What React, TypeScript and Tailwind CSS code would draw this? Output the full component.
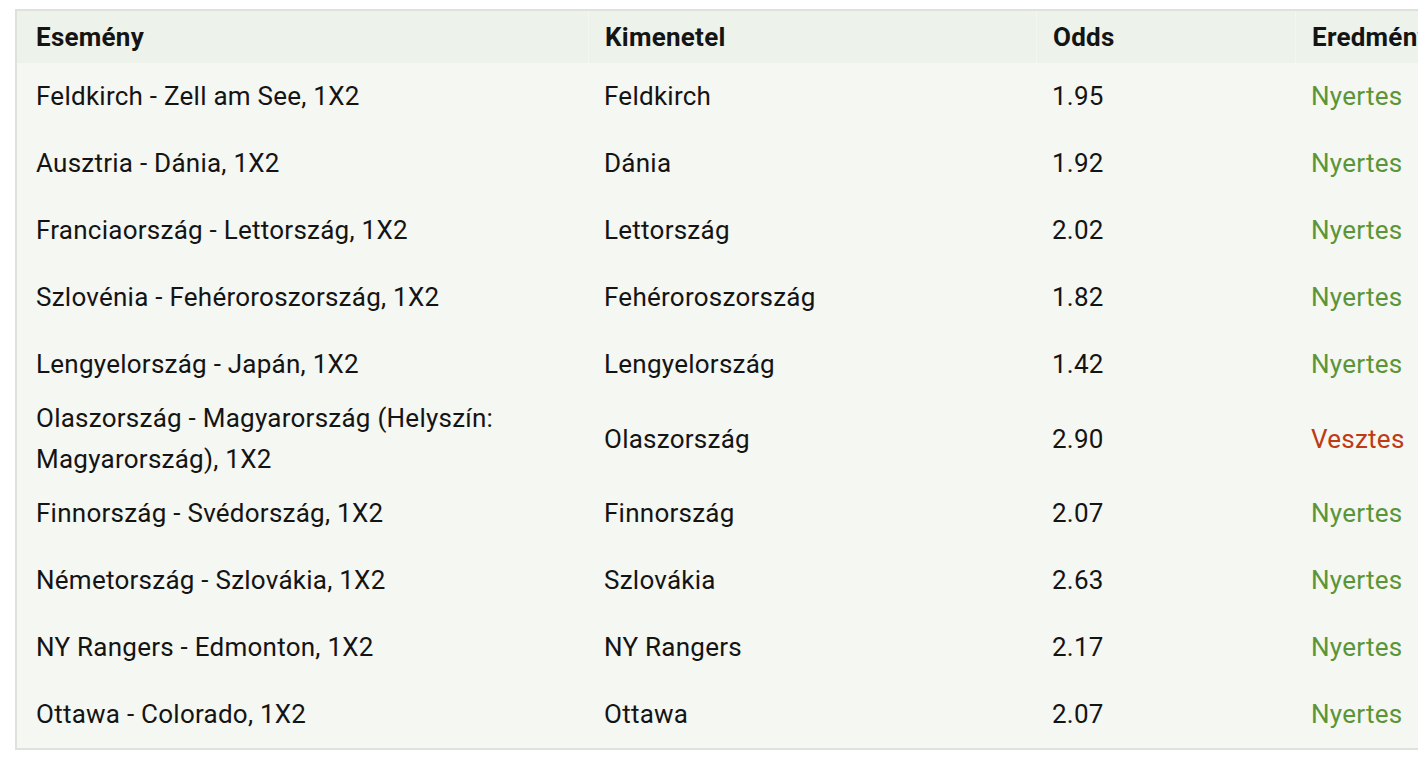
import React from 'react';

type Bet = {
    event: string;
    outcome: string;
    odds: string;
    won: boolean;
};

const bets: Bet[] = [
    { event: 'Feldkirch - Zell am See, 1X2', outcome: 'Feldkirch', odds: '1.95', won: true },
    { event: 'Ausztria - Dánia, 1X2', outcome: 'Dánia', odds: '1.92', won: true },
    { event: 'Franciaország - Lettország, 1X2', outcome: 'Lettország', odds: '2.02', won: true },
    { event: 'Szlovénia - Fehéroroszország, 1X2', outcome: 'Fehéroroszország', odds: '1.82', won: true },
    { event: 'Lengyelország - Japán, 1X2', outcome: 'Lengyelország', odds: '1.42', won: true },
    { event: 'Olaszország - Magyarország (Helyszín: Magyarország), 1X2', outcome: 'Olaszország', odds: '2.90', won: false },
    { event: 'Finnország - Svédország, 1X2', outcome: 'Finnország', odds: '2.07', won: true },
    { event: 'Németország - Szlovákia, 1X2', outcome: 'Szlovákia', odds: '2.63', won: true },
    { event: 'NY Rangers - Edmonton, 1X2', outcome: 'NY Rangers', odds: '2.17', won: true },
    { event: 'Ottawa - Colorado, 1X2', outcome: 'Ottawa', odds: '2.07', won: true },
];

const cols = 'grid grid-cols-[571px_448px_259px_240px]';

const App: React.FC = () => {
    return (
        <div className="w-[1418px] h-[757px] overflow-hidden bg-white pt-[9px] pl-[15px] font-['Roboto',sans-serif] text-[26px] tracking-[0.25px] text-[#141414]">
            <div className="w-[1520px] border-2 border-[#dfe1dd] bg-[#f5f7f2]">
                <div className={`${cols} h-[52px] bg-[#edf2ea] font-bold`}>
                    <div className="flex items-center pl-[19px]">Esemény</div>
                    <div className="flex items-center pl-[16px] border-l border-[#f3f6f1]">Kimenetel</div>
                    <div className="flex items-center pl-[16px] border-l border-[#f3f6f1]">Odds</div>
                    <div className="flex items-center pl-[16px] border-l border-[#f3f6f1]">Eredmény</div>
                </div>
                {bets.map((bet, i) => (
                    <div key={i} className={`${cols} min-h-[67px] leading-[41px]`}>
                        <div className="flex items-center pl-[19px] pr-[60px]">{bet.event}</div>
                        <div className="flex items-center pl-[16px]">{bet.outcome}</div>
                        <div className="flex items-center pl-[16px]">{bet.odds}</div>
                        <div className={`flex items-center pl-[16px] ${bet.won ? 'text-[#5b9537]' : 'text-[#bf3a12]'}`}>
                            {bet.won ? 'Nyertes' : 'Vesztes'}
                        </div>
                    </div>
                ))}
            </div>
        </div>
    );
};

export default App;
